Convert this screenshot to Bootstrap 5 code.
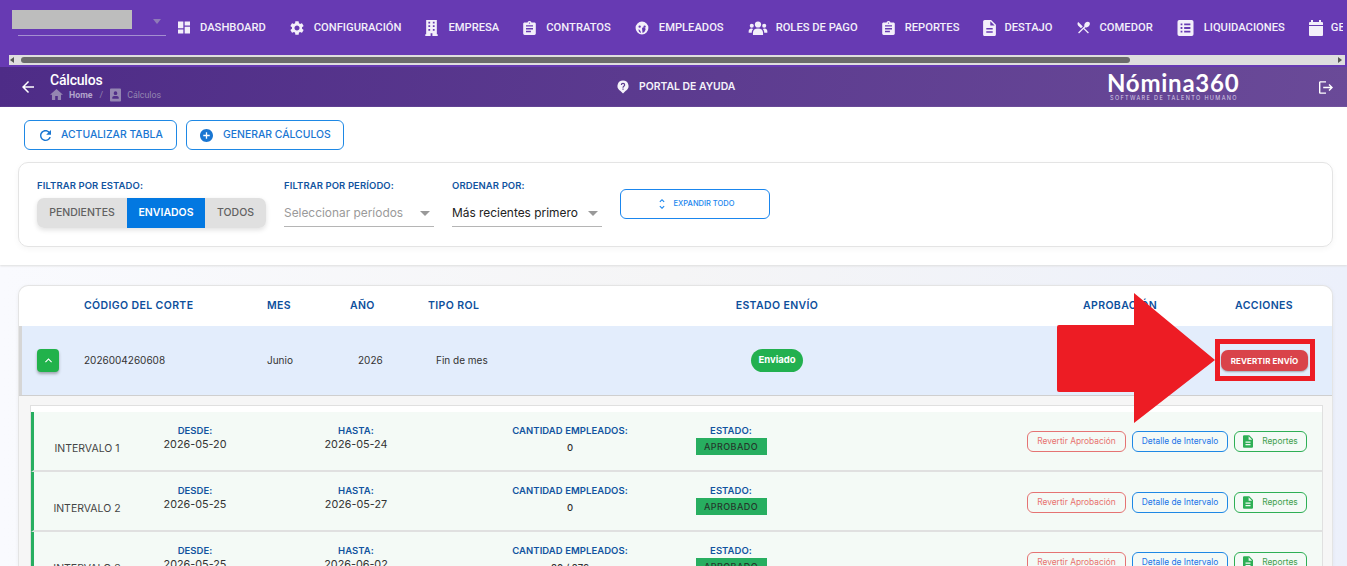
<!DOCTYPE html>
<html lang="es">
<head>
<meta charset="utf-8">
<title>Cálculos</title>
<link rel="stylesheet" href="https://cdn.jsdelivr.net/npm/bootstrap@5.3.0/dist/css/bootstrap.min.css">
<style>
html,body{height:566px;overflow:hidden}
body{font-family:"Inter","Liberation Sans",sans-serif;background:linear-gradient(90deg,#f9fafe,#f5f5f6 50%,#ecf0fb);color:#333}
.ico{fill:currentColor;flex:none;display:block}
.topnav{height:67px;background:#673ab3;color:#fff;position:relative;font-family:"Roboto","Liberation Sans",sans-serif}
.navrow{height:55px;overflow:hidden;white-space:nowrap}
.brandbox{width:178px;flex:none;position:relative;height:55px}
.blurbox{width:120px;height:19px;margin:10px 0 0 12px;background:#bdbdbd}
.brandline{height:1px;margin:6px 12px 0 18px;background:#a48fd0}
.brandcaret{position:absolute;left:153px;top:19px;border:4px solid transparent;border-top:5px solid #8f7bb8;border-left-width:4px}
.navlink{color:#f3effa;font-size:11.2px;font-weight:500;display:flex;align-items:center;gap:10px;text-decoration:none;padding-top:1px;flex:none}
.navlink.tight{gap:8px}
.navitems{gap:24px;width:1165px;overflow:hidden;flex:none}
.fakebar{height:10px;margin:0 2px 0 9px;background:#dedede;align-items:center}
.fakethumb{width:1109px;height:6px;border-radius:3px;background:#6b6b6b;margin-left:7px}
.arrl,.arrr{width:0;height:0;border:3px solid transparent}
.arrl{border-right:4px solid #555;margin-left:1px;border-left:0}
.arrr{border-left:4px solid #555;margin-left:auto;margin-right:3px;border-right:0}
.subbar{height:40px;background:linear-gradient(100deg,#4e2c87,#6a4a98);color:#fff}
.backbtn{margin:0 16px 0 22px}
.titlebox{width:567px;font-family:"Roboto","Liberation Sans",sans-serif}
.pagetitle{font-size:14px;font-weight:500;line-height:15px;letter-spacing:-.2px}
.crumbs{font-size:8.8px;line-height:14px;color:#9486b2;gap:6px}
.crumbs b{font-weight:700;color:#b3a5cc}
.crumbs .sep{margin:0 1px}
.helplink{font-size:10.4px;font-weight:600;width:490px;color:#f5f2fa;gap:10px}
.logobox{width:212px;text-align:left}
.logomain{font-size:24px;line-height:22px;font-weight:700;letter-spacing:.75px;color:#fff;font-family:"Lato","Inter",sans-serif}
.logosub{font-size:5.5px;line-height:8px;letter-spacing:1.36px;color:#d7cde4;margin-left:3px;white-space:nowrap}
.toolsec{height:158px;background:#fff;box-shadow:0 1px 2px #ddd;position:relative}
.toolbtns{padding:13px 0 0 24px;gap:9px;height:55px}
.toolbtn{height:30px;font-size:10.4px;font-weight:500;border-radius:6px;padding:0 0 0 15px;border:1px solid #1e88e5;color:#1976d2;background:#fff;display:flex;align-items:center;gap:10px;white-space:nowrap}
.toolbtn.w1{width:153px}.toolbtn.w2{width:158px;padding-left:13px;gap:10px}
.filtercard{height:85px;margin:0 14px 0 18px;border:1px solid #e4e4e4;border-radius:10px;box-shadow:0 2px 6px #0000000a;padding:17px 18px 0;gap:18px}
.flabel{font-size:9.5px;font-weight:600;color:#11549f;letter-spacing:.1px;line-height:12px;margin-bottom:6px;white-space:nowrap}
.segbtns{height:30px;border-radius:7px;box-shadow:0 2px 5px #0000001f;overflow:hidden}
.filtercard .btn-group.segbtns .btn{font-size:10.5px;font-weight:500;border:0;border-radius:0;background:#e0e0e0;color:#616161;padding:0;height:30px;margin-left:0}
.filtercard .btn-group.segbtns .btn.on{background:#0278e1;color:#fff;font-weight:600}
.sg1{flex:none;width:90px}.sg2{flex:none;width:78px}.sg3{flex:none;width:61px}
.fselect{width:150px;height:29px;border-bottom:1px solid #b5b5b5;font-size:11.9px;color:#9a9a9a;align-items:center;justify-content:space-between;padding:2px 4px 0 0}
.fselect.dark{color:#222}
.tri{border:5px solid transparent;border-top:5px solid #999;border-bottom:0;margin-top:1px}
.expbtn{width:150px;height:30px;margin-top:9px;border:1px solid #1a86ee;border-radius:6px;color:#1a86ee;font-size:7.5px;font-weight:500;gap:9px;background:#fff;padding:0 0 0 3px}
.datacard{margin:20px 14px 0 18px;border:1px solid #e4e4e4;border-bottom:0;border-radius:10px 10px 0 0;background:#fff;height:281px;overflow:hidden;box-shadow:0 1px 4px #0000000d}
.gridrow{display:grid;grid-template-columns:65px 183px 83px 78px 192px 314px 91px 190px 98px 1fr;align-items:center}
.headrow{height:40px;font-size:10.5px;font-weight:600;color:#0d4f9c;letter-spacing:.38px}
.mainrow{height:70px;background:#e3edfc;box-shadow:inset 3px 0 0 #d6d6d6;border-bottom:1px solid #cfcfcf;font-size:10px;color:#333}
.tc{text-align:center}
.togglebtn{width:22px;height:23px;margin-left:18px;padding:0;border:0;border-radius:4px;background:#21b24b;color:#fff;box-shadow:0 2px 3px #0000004d;display:flex;align-items:center;justify-content:center}
.pillsent{background:#22b04f;color:#fff;font-size:9.5px;font-weight:700;width:52px;height:23px;border-radius:12px;display:inline-flex;align-items:center;justify-content:center}
.revbtn{width:87px;height:21px;margin-left:6px;padding:0;border:0;border-radius:7px;background:#d9434a;color:#fff;font-size:8px;font-weight:700;letter-spacing:.1px;box-shadow:0 1px 2px #0000004d}
.expandarea{background:#f6f6f6;padding:9px 9px 0 11px;height:171px;overflow:hidden}
.innerbox{border:1px solid #e0e0e0;border-bottom:0;background:#fff;padding-top:6px}
.introw{display:grid;grid-template-columns:106px 110px 212px 216px 106px 1fr;height:60px;background:#f4faf6;border-left:3px solid #27ae60;border-bottom:2px solid #e0e0e0;align-items:start;text-align:center}
.cellname{font-size:10.5px;color:#444;padding-top:29px}
.cellinfo{padding-top:12px}
.clabel{font-size:9.5px;font-weight:600;color:#11549f;letter-spacing:.05px;line-height:13px}
.cdate{font-size:10.8px;color:#333;line-height:15px}
.cqty{font-size:9.5px;font-weight:500;color:#333;line-height:15px;margin-top:3px}
.okbadge{display:block;width:71px;height:17px;line-height:17px;margin:1px auto 0;background:#27ae60;color:#24382c;font-size:9px;font-weight:500;letter-spacing:.45px}
.actions{gap:6px;justify-content:flex-end;padding:19px 15px 0 0}
.introw + .introw .actions{padding-top:20px}
.actbtn{height:21px;font-size:8.4px;padding:0;border-radius:6px;background:transparent;border:1px solid;display:flex;align-items:center;justify-content:center;white-space:nowrap}
.ab1{width:99px;border-color:#e57373;color:#e8716f}
.ab2{width:96px;border-color:#1e88e5;color:#1a73e8}
.ab3{width:73px;border-color:#2eaf55;color:#3f9e4d;gap:9px}
.ab3 .ico{color:#2eaf55}
.annot{position:absolute;left:0;top:0;pointer-events:none}
</style>
</head>
<body>
<svg width="0" height="0" class="position-absolute">
<symbol id="i-dash" viewBox="3 3 18 18"><path d="M3 13h8V3H3v10zm0 8h8v-6H3v6zm10 0h8V11h-8v10zm0-18v6h8V3h-8z"/></symbol>
<symbol id="i-gear" viewBox="2 2 20 20"><path d="M19.14 12.94c.04-.3.06-.61.06-.94 0-.32-.02-.64-.07-.94l2.03-1.58a.49.49 0 0 0 .12-.61l-1.92-3.32a.488.488 0 0 0-.59-.22l-2.39.96c-.5-.38-1.03-.7-1.62-.94l-.36-2.54a.484.484 0 0 0-.48-.41h-3.84c-.24 0-.43.17-.47.41l-.36 2.54c-.59.24-1.13.57-1.62.94l-2.39-.96c-.22-.08-.47 0-.59.22L2.74 8.87c-.12.21-.08.47.12.61l2.03 1.58c-.05.3-.09.63-.09.94s.02.64.07.94l-2.03 1.58a.49.49 0 0 0-.12.61l1.92 3.32c.12.22.37.29.59.22l2.39-.96c.5.38 1.03.7 1.62.94l.36 2.54c.05.24.24.41.48.41h3.84c.24 0 .44-.17.47-.41l.36-2.54c.59-.24 1.13-.56 1.62-.94l2.39.96c.22.08.47 0 .59-.22l1.92-3.32c.12-.22.07-.47-.12-.61l-2.01-1.58zM12 15.6c-1.98 0-3.6-1.62-3.6-3.6s1.62-3.6 3.6-3.6 3.6 1.62 3.6 3.6-1.62 3.6-3.6 3.6z"/></symbol>
<symbol id="i-bldg" viewBox="0 0 14 18"><path fill-rule="evenodd" d="M1 0h12v16h1v2H8v-3H6v3H0v-2h1zM3.500 2v2h2V2zm5 0v2h2V2zm-5 4v2h2V6zm5 0v2h2V6zm-5 4v2h2v-2zm5 0v2h2v-2z"/></symbol>
<symbol id="i-assign" viewBox="3 1 18 20"><path d="M19 3h-4.180C14.400 1.840 13.300 1 12 1c-1.300 0-2.400.84-2.820 2H5c-1.100 0-2 .9-2 2v14c0 1.100.9 2 2 2h14c1.100 0 2-.9 2-2V5c0-1.100-.9-2-2-2zm-7 0c.55 0 1 .45 1 1s-.45 1-1 1-1-.45-1-1 .45-1 1-1zm2 14H7v-2h7v2zm3-4H7v-2h10v2zm0-4H7V7h10v2z"/></symbol>
<symbol id="i-face" viewBox="0 0 24 24"><path fill-rule="evenodd" d="M12 1a11 11 0 1 0 0 22 11 11 0 0 0 0-22zM8 7.500a2 2 0 1 1 0 4 2 2 0 0 1 0-4zm8.500 0a2 2 0 1 1 0 4 2 2 0 0 1 0-4zM6 14c2 .5 4 3 4.500 6.500C7.500 20 6 17 6 14zm6-1a3 3 0 0 1 6 2c-1 3-3 5-5 5.500z"/></symbol>
<symbol id="i-users" viewBox="0 0 24 18"><circle cx="12" cy="4.500" r="4"/><circle cx="4" cy="6" r="2.600"/><circle cx="20" cy="6" r="2.600"/><path d="M5.500 18v-3c0-3.500 2.500-5.500 6.500-5.500s6.500 2 6.500 5.500v3zM0 15v-2c0-2 1.500-3.500 3.500-3.500 1 0 1.800.3 2.300.8C4.600 11.500 4 13 4 15zM24 15v-2c0-2-1.500-3.500-3.500-3.500-1 0-1.800.3-2.300.8 1.200 1.200 1.800 2.700 1.800 4.700z"/></symbol>
<symbol id="i-doc" viewBox="4 2 16 20"><path d="M14 2H6c-1.100 0-1.990.9-1.990 2L4 20c0 1.100.89 2 1.990 2H18c1.100 0 2-.9 2-2V8l-6-6zm2 16H8v-2h8v2zm0-4H8v-2h8v2zm-3-5V3.500L18.500 9H13z"/></symbol>
<symbol id="i-dine" viewBox="2 2 20 20"><path d="M8.100 13.340l2.830-2.830L3.910 3.500c-1.560 1.560-1.560 4.090 0 5.660l4.190 4.180zm6.780-1.810c1.530.71 3.680.21 5.270-1.380 1.910-1.910 2.280-4.650.81-6.120-1.460-1.460-4.200-1.100-6.120.81-1.590 1.590-2.090 3.740-1.380 5.270L3.700 19.870l1.410 1.410L12 14.410l6.880 6.880 1.410-1.410L13.410 13l1.470-1.470z"/></symbol>
<symbol id="i-list" viewBox="3 3 18 18"><path fill-rule="evenodd" d="M3 5a2 2 0 0 1 2-2h14a2 2 0 0 1 2 2v14a2 2 0 0 1-2 2H5a2 2 0 0 1-2-2zM6.500 7v2h2V7zm4 0v2h7V7zm-4 4v2h2v-2zm4 0v2h7v-2zm-4 4v2h2v-2zm4 0v2h7v-2z"/></symbol>
<symbol id="i-cal" viewBox="0 0 14 16"><path d="M2 0h2v2h6V0h2v2h1a1 1 0 0 1 1 1v2H0V3a1 1 0 0 1 1-1h1zM0 6h14v9a1 1 0 0 1-1 1H1a1 1 0 0 1-1-1z"/></symbol>
<symbol id="i-home" viewBox="2 3 20 17"><path d="M10 20v-6h4v6h5v-8h3L12 3 2 12h3v8z"/></symbol>
<symbol id="i-port" viewBox="0 0 12 14"><path fill-rule="evenodd" d="M1 0h10a1 1 0 0 1 1 1v12a1 1 0 0 1-1 1H1a1 1 0 0 1-1-1V1a1 1 0 0 1 1-1zm5 3a2 2 0 1 0 0 4 2 2 0 0 0 0-4zM2.500 11h7V9.500C9.500 8.500 8 8 6 8s-3.500.5-3.500 1.500z"/></symbol>
<symbol id="i-back" viewBox="4 4 16 16"><path d="M20 11H7.830l5.590-5.590L12 4l-8 8 8 8 1.410-1.410L7.830 13H20v-2z"/></symbol>
<symbol id="i-help" viewBox="0 0 24 28"><path fill-rule="evenodd" d="M12 1a11 11 0 0 0-5 20.800L12 27l5-5.200A11 11 0 0 0 12 1zm-1.200 16h2.400v2.400h-2.400zM12 5.500a4.500 4.500 0 0 1 4.500 4.500c0 2.700-3.300 3-3.300 5.500h-2.400c0-3.700 3.300-3.500 3.300-5.500a2.100 2.100 0 0 0-4.200 0H7.500A4.500 4.500 0 0 1 12 5.500z"/></symbol>
<symbol id="i-exit" viewBox="2 3 20 18"><path d="M17 7l-1.410 1.410L18.170 11H8v2h10.170l-2.580 2.580L17 17l5-5zM4 5h8V3H4c-1.100 0-2 .9-2 2v14c0 1.100.9 2 2 2h8v-2H4V5z"/></symbol>
<symbol id="i-ref" viewBox="4 4 16 16"><path d="M17.650 6.350C16.200 4.900 14.210 4 12 4c-4.420 0-7.990 3.580-7.990 8s3.570 8 7.990 8c3.730 0 6.840-2.550 7.730-6h-2.080c-.82 2.330-3.040 4-5.650 4-3.310 0-6-2.690-6-6s2.690-6 6-6c1.660 0 3.140.69 4.220 1.780L13 11h7V4l-2.350 2.350z"/></symbol>
<symbol id="i-add" viewBox="2 2 20 20"><path d="M12 2C6.480 2 2 6.480 2 12s4.480 10 10 10 10-4.480 10-10S17.520 2 12 2zm5 11h-4v4h-2v-4H7v-2h4V7h2v4h4v2z"/></symbol>
<symbol id="i-unfold" viewBox="7 3 10 18"><path d="M12 5.830L15.170 9l1.410-1.410L12 3 7.410 7.590 8.830 9 12 5.830zm0 12.340L8.830 15l-1.410 1.410L12 21l4.590-4.590L15.170 15 12 18.170z"/></symbol>
<symbol id="i-up" viewBox="6 8 12 8"><path d="M12 8l-6 6 1.410 1.410L12 10.830l4.590 4.580L18 14z"/></symbol>
</svg>

<header class="topnav">
  <div class="navrow d-flex">
    <div class="brandbox">
      <div class="blurbox"></div>
      <div class="brandline"></div>
      <span class="brandcaret"></span>
    </div>
    <nav class="d-flex navitems align-items-center">
      <a class="navlink" href="#"><svg class="ico" width="12" height="13"><use href="#i-dash"/></svg>DASHBOARD</a>
      <a class="navlink" href="#"><svg class="ico" width="14" height="14"><use href="#i-gear"/></svg>CONFIGURACIÓN</a>
      <a class="navlink" href="#"><svg class="ico" width="13" height="16"><use href="#i-bldg"/></svg>EMPRESA</a>
      <a class="navlink" href="#"><svg class="ico" width="13" height="14"><use href="#i-assign"/></svg>CONTRATOS</a>
      <a class="navlink" href="#"><svg class="ico" width="14" height="14"><use href="#i-face"/></svg>EMPLEADOS</a>
      <a class="navlink tight" href="#"><svg class="ico" width="20" height="14"><use href="#i-users"/></svg>ROLES DE PAGO</a>
      <a class="navlink" href="#"><svg class="ico" width="13" height="14"><use href="#i-assign"/></svg>REPORTES</a>
      <a class="navlink tight" href="#"><svg class="ico" width="13" height="16"><use href="#i-doc"/></svg>DESTAJO</a>
      <a class="navlink" href="#"><svg class="ico" width="13" height="13"><use href="#i-dine"/></svg>COMEDOR</a>
      <a class="navlink" href="#"><svg class="ico" width="17" height="16"><use href="#i-list"/></svg>LIQUIDACIONES</a>
      <a class="navlink tight" href="#"><svg class="ico" width="14" height="16"><use href="#i-cal"/></svg>GESTIÓN</a>
    </nav>
  </div>
  <div class="fakebar d-flex">
    <span class="arrl"></span><span class="fakethumb"></span><span class="arrr"></span>
  </div>
</header>

<div class="subbar d-flex align-items-center">
  <svg class="ico backbtn" width="12" height="12"><use href="#i-back"/></svg>
  <div class="titlebox">
    <div class="pagetitle">Cálculos</div>
    <div class="crumbs d-flex align-items-center">
      <svg class="ico" width="13" height="11"><use href="#i-home"/></svg><b>Home</b><span class="sep">/</span>
      <svg class="ico" width="11" height="14"><use href="#i-port"/></svg><span>Cálculos</span>
    </div>
  </div>
  <div class="helplink d-flex align-items-center">
    <svg class="ico" width="12" height="14"><use href="#i-help"/></svg>PORTAL DE AYUDA
  </div>
  <div class="logobox">
    <div class="logomain">Nómina360</div>
    <div class="logosub">SOFTWARE DE TALENTO HUMANO</div>
  </div>
  <svg class="ico" width="14" height="13"><use href="#i-exit"/></svg>
</div>

<section class="toolsec">
  <div class="toolbtns d-flex">
    <button class="btn toolbtn w1"><svg class="ico" width="11" height="11"><use href="#i-ref"/></svg>ACTUALIZAR TABLA</button>
    <button class="btn toolbtn w2"><svg class="ico" width="13" height="13"><use href="#i-add"/></svg>GENERAR CÁLCULOS</button>
  </div>
  <div class="filtercard d-flex">
    <div>
      <div class="flabel">FILTRAR POR ESTADO:</div>
      <div class="btn-group segbtns">
        <button class="btn sg1">PENDIENTES</button>
        <button class="btn on sg2">ENVIADOS</button>
        <button class="btn sg3">TODOS</button>
      </div>
    </div>
    <div>
      <div class="flabel">FILTRAR POR PERÍODO:</div>
      <div class="fselect d-flex"><span>Seleccionar períodos</span><span class="tri"></span></div>
    </div>
    <div>
      <div class="flabel">ORDENAR POR:</div>
      <div class="fselect dark d-flex"><span>Más recientes primero</span><span class="tri"></span></div>
    </div>
    <div>
      <button class="btn expbtn d-flex align-items-center justify-content-center"><svg class="ico" width="6" height="10"><use href="#i-unfold"/></svg>EXPANDIR TODO</button>
    </div>
  </div>
</section>

<main class="datacard">
  <div class="gridrow headrow">
    <span></span><span>CÓDIGO DEL CORTE</span><span>MES</span><span>AÑO</span><span>TIPO ROL</span>
    <span class="tc">ESTADO ENVÍO</span><span></span><span class="tc">APROBACIÓN</span><span class="tc">ACCIONES</span>
  </div>
  <div class="gridrow mainrow">
    <span><button class="btn togglebtn"><svg class="ico" width="7" height="5"><use href="#i-up"/></svg></button></span>
    <span>2026004260608</span><span>Junio</span><span class="ps-2">2026</span><span class="ps-2">Fin de mes</span>
    <span class="tc"><span class="pillsent">Enviado</span></span><span></span><span></span>
    <span><button class="btn revbtn">REVERTIR ENVÍO</button></span>
  </div>
  <div class="expandarea">
    <div class="innerbox">
      <div class="introw">
        <div class="cellname">INTERVALO 1</div>
        <div class="cellinfo"><div class="clabel">DESDE:</div><div class="cdate">2026-05-20</div></div>
        <div class="cellinfo"><div class="clabel">HASTA:</div><div class="cdate">2026-05-24</div></div>
        <div class="cellinfo"><div class="clabel">CANTIDAD EMPLEADOS:</div><div class="cqty">0</div></div>
        <div class="cellinfo"><div class="clabel">ESTADO:</div><span class="okbadge">APROBADO</span></div>
        <div class="d-flex actions">
          <button class="btn actbtn ab1">Revertir Aprobación</button>
          <button class="btn actbtn ab2">Detalle de Intervalo</button>
          <button class="btn actbtn ab3"><svg class="ico" width="10" height="13"><use href="#i-doc"/></svg>Reportes</button>
        </div>
      </div>
      <div class="introw">
        <div class="cellname">INTERVALO 2</div>
        <div class="cellinfo"><div class="clabel">DESDE:</div><div class="cdate">2026-05-25</div></div>
        <div class="cellinfo"><div class="clabel">HASTA:</div><div class="cdate">2026-05-27</div></div>
        <div class="cellinfo"><div class="clabel">CANTIDAD EMPLEADOS:</div><div class="cqty">0</div></div>
        <div class="cellinfo"><div class="clabel">ESTADO:</div><span class="okbadge">APROBADO</span></div>
        <div class="d-flex actions">
          <button class="btn actbtn ab1">Revertir Aprobación</button>
          <button class="btn actbtn ab2">Detalle de Intervalo</button>
          <button class="btn actbtn ab3"><svg class="ico" width="10" height="13"><use href="#i-doc"/></svg>Reportes</button>
        </div>
      </div>
      <div class="introw">
        <div class="cellname">INTERVALO 3</div>
        <div class="cellinfo"><div class="clabel">DESDE:</div><div class="cdate">2026-05-25</div></div>
        <div class="cellinfo"><div class="clabel">HASTA:</div><div class="cdate">2026-06-02</div></div>
        <div class="cellinfo"><div class="clabel">CANTIDAD EMPLEADOS:</div><div class="cqty">80 / 276</div></div>
        <div class="cellinfo"><div class="clabel">ESTADO:</div><span class="okbadge">APROBADO</span></div>
        <div class="d-flex actions">
          <button class="btn actbtn ab1">Revertir Aprobación</button>
          <button class="btn actbtn ab2">Detalle de Intervalo</button>
          <button class="btn actbtn ab3"><svg class="ico" width="10" height="13"><use href="#i-doc"/></svg>Reportes</button>
        </div>
      </div>
    </div>
  </div>
</main>

<svg class="annot" width="1347" height="566" aria-hidden="true">
  <path d="M1057 327a2 2 0 0 1 2-2h75v-32l81 67-81 63v-31h-75a2 2 0 0 1-2-2z" fill="#ed1c24"/>
  <rect x="1217.500" y="341.500" width="95" height="37" fill="none" stroke="#ed1c24" stroke-width="5"/>
</svg>
<script src="https://cdn.jsdelivr.net/npm/bootstrap@5.3.0/dist/js/bootstrap.bundle.min.js"></script>
</body>
</html>
